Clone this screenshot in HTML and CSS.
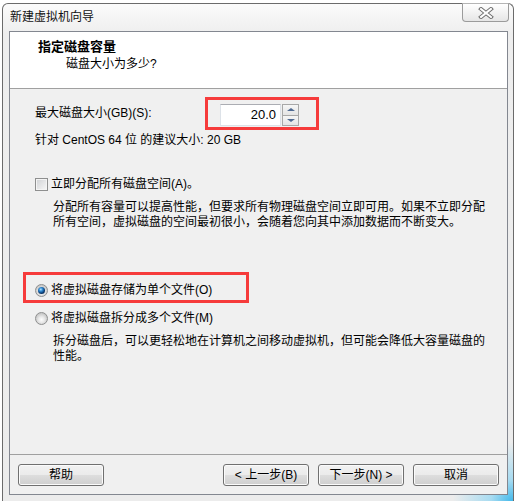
FILE: index.html
```html
<!DOCTYPE html>
<html lang="zh-CN">
<head>
<meta charset="utf-8">
<title>新建虚拟机向导</title>
<link rel="stylesheet" href="styles.css">
</head>
<body>
<div class="window">
  <div class="titlebar">
    <span class="title">新建虚拟机向导</span>
    <div class="close">
      <svg width="16" height="12" viewBox="0 0 16 12">
        <path d="M3 2 L13 10 M13 2 L3 10" stroke="#6f6f6f" stroke-width="4" stroke-linecap="square" fill="none"/>
        <path d="M3 2 L13 10 M13 2 L3 10" stroke="#ffffff" stroke-width="2" stroke-linecap="square" fill="none"/>
      </svg>
    </div>
  </div>
  <div class="client">
    <div class="header">
      <div class="h-title">指定磁盘容量</div>
      <div class="h-sub">磁盘大小为多少?</div>
    </div>
    <div class="content">
      <div class="size-row">
        <span class="size-label">最大磁盘大小(GB)(S):</span>
        <div class="mark mark-spin">
          <div class="spin">
            <div class="spin-input">20.0</div>
            <div class="spin-btns">
              <span class="spin-btn"><span class="arrow-up"></span></span>
              <span class="spin-btn"><span class="arrow-down"></span></span>
            </div>
          </div>
        </div>
      </div>
      <div class="hint">针对 CentOS 64 位 的建议大小: 20 GB</div>
      <div class="option check-row"><span class="checkbox"></span>立即分配所有磁盘空间(A)。</div>
      <p class="desc desc-1">分配所有容量可以提高性能，但要求所有物理磁盘空间立即可用。如果不立即分配<br>所有空间，虚拟磁盘的空间最初很小，会随着您向其中添加数据而不断变大。</p>
      <div class="mark mark-radio">
        <div class="option"><span class="radio on"></span>将虚拟磁盘存储为单个文件(O)</div>
      </div>
      <div class="option radio-row-2"><span class="radio"></span>将虚拟磁盘拆分成多个文件(M)</div>
      <p class="desc desc-2">拆分磁盘后，可以更轻松地在计算机之间移动虚拟机，但可能会降低大容量磁盘的<br>性能。</p>
    </div>
    <div class="footer">
      <button class="btn">帮助</button>
      <button class="btn btn-back">&lt; 上一步(B)</button>
      <button class="btn">下一步(N) &gt;</button>
      <button class="btn">取消</button>
    </div>
  </div>
</div>
</body>
</html>
```

FILE: styles.css
```css
* { box-sizing: border-box; }
html, body { margin: 0; padding: 0; }
body {
  width: 517px;
  height: 501px;
  overflow: hidden;
  background: #ffffff;
  font-family: "Liberation Sans", "Noto Sans CJK SC", sans-serif;
  font-size: 12px;
  line-height: 15px;
  color: #000;
}
.window {
  margin: 3px 0 0 2px;
  width: 512px;
  height: 499px;
  border: 1px solid #6b6b6b;
  border-bottom: none;
  border-radius: 6px 6px 0 0;
  padding: 0 5px 6px 6px;
  display: flex;
  flex-direction: column;
  background:
    radial-gradient(circle at 100% 100%, #3fb7ea 0, rgba(110, 205, 245, 0.55) 22px, rgba(236, 236, 236, 0) 60px),
    linear-gradient(#fbfbfb, #eeeeee 30px, #ececec);
}
.titlebar {
  height: 27px;
  display: flex;
  justify-content: space-between;
  align-items: flex-start;
}
.title {
  padding: 6px 0 0 1px;
  color: #111;
}
.close {
  margin: -1px -1px 0 0;
  width: 47px;
  height: 19px;
  border: 1px solid #9b9b9b;
  border-top-color: #b5b5b5;
  border-radius: 0 0 4px 4px;
  background: linear-gradient(#ffffff, #f1f1f1 55%, #e6e6e6);
  display: flex;
  align-items: center;
  justify-content: center;
}
.client {
  height: 464px;
  width: 499px;
  border: 1px solid #838790;
  background: #f0f0f0;
  display: flex;
  flex-direction: column;
}
.header {
  height: 57px;
  background: #ffffff;
  border-bottom: 1px solid #a0a0a0;
  padding: 7px 0 0 28px;
}
.h-title {
  font-weight: bold;
  font-size: 13px;
  line-height: 15px;
}
.h-sub {
  margin-top: 3px;
  padding-left: 28px;
}
.content {
  flex: 1;
  padding-top: 8px;
}
.size-row {
  display: flex;
  align-items: center;
}
.size-label {
  width: 195px;
  padding-left: 25px;
}
.mark {
  border: 3px solid #f63b3b;
}
.mark-spin {
  padding: 4px 17px 1px 12px;
}
.spin {
  display: flex;
  gap: 1px;
  height: 22px;
}
.spin-input {
  width: 61px;
  border: 1px solid #dde2e8;
  border-top-color: #abadb3;
  background: #fff;
  text-align: right;
  font-size: 13px;
  line-height: 20px;
  padding-right: 4px;
}
.spin-btns {
  width: 17px;
  display: flex;
  flex-direction: column;
}
.spin-btn {
  flex: 1;
  border: 1px solid #a8a8a8;
  background: linear-gradient(#f6f6f6, #e4e4e4);
  display: flex;
  align-items: center;
  justify-content: center;
}
.spin-btn + .spin-btn { border-top: none; }
.arrow-up, .arrow-down {
  width: 0;
  height: 0;
  border-left: 4px solid transparent;
  border-right: 4px solid transparent;
}
.arrow-up { border-bottom: 3px solid #4f6a92; }
.arrow-down { border-top: 3px solid #4f6a92; }
.hint {
  margin-top: 3px;
  padding-left: 25px;
}
.option {
  display: flex;
  align-items: center;
  height: 15px;
}
.check-row {
  margin-top: 29px;
  padding-left: 25px;
}
.checkbox {
  width: 13px;
  height: 13px;
  margin-right: 3px;
  border: 1px solid #8e8f8f;
  background: linear-gradient(135deg, #cfd1d4, #f8f8f8);
  box-shadow: inset 0 0 0 1px #f4f4f4;
}
.desc {
  margin: 0;
  padding-left: 43px;
}
.desc-1 { margin-top: 8px; }
.mark-radio {
  margin: 42px 0 0 13px;
  width: 226px;
  padding: 8px 0 2px 9px;
}
.radio {
  width: 13px;
  height: 13px;
  margin-right: 3px;
  border-radius: 50%;
  border: 1px solid #8e8f8f;
  background: radial-gradient(circle at 50% 60%, #fdfdfd 0, #e8e8e8 3px, #c9c9c9 6px);
  display: flex;
  align-items: center;
  justify-content: center;
}
.radio.on::after {
  content: "";
  width: 7px;
  height: 7px;
  border-radius: 50%;
  background: radial-gradient(circle at 40% 35%, #bfe6ff 0, #3c97dc 1.5px, #165a9c 3px, #0b3566 4px);
}
.radio-row-2 {
  margin-top: 8px;
  padding-left: 25px;
}
.desc-2 { margin-top: 8px; }
.footer {
  height: 40px;
  border-top: 1px solid #a0a0a0;
  padding: 9px 8px 8px;
  display: flex;
  gap: 9px;
}
.btn {
  width: 86px;
  height: 22px;
  margin: 0;
  padding: 0;
  border: 1px solid #707070;
  border-radius: 3px;
  background: linear-gradient(#f2f2f2 0%, #ebebeb 48%, #dddddd 52%, #cfcfcf 100%);
  box-shadow: inset 0 0 0 1px #fbfbfb;
  font-family: "Liberation Sans", "Noto Sans CJK SC", sans-serif;
  font-size: 12px;
  color: #000;
  line-height: 18px;
}
.btn-back { margin-left: auto; }
```
